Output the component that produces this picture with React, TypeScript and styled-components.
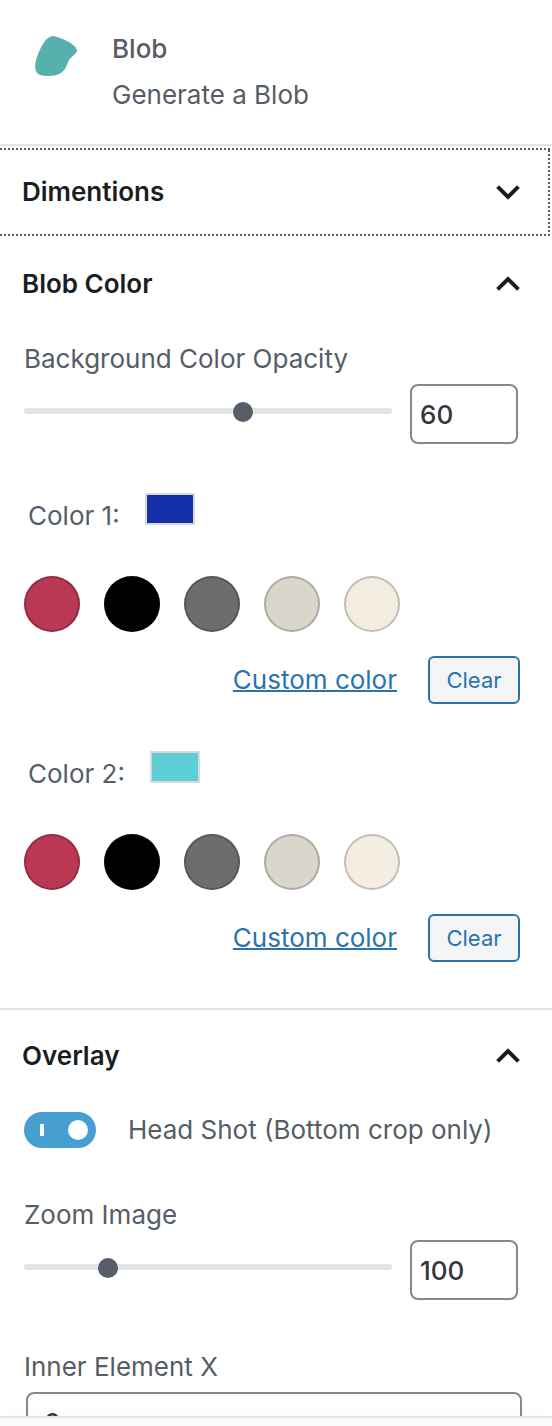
import React, { useId, useState } from "react";
import styled, { createGlobalStyle, css } from "styled-components";

const GlobalStyle = createGlobalStyle`
  *, *::before, *::after { box-sizing: border-box; }
  body {
    margin: 0;
    background: #fff;
    color: #555d66;
    font-family: Inter, "Liberation Sans", sans-serif;
    font-size: 26px;
    line-height: 32px;
  }
  button, input { font: inherit; color: inherit; }
  h2, p { margin: 0; font: inherit; }
`;

const Sidebar = styled.aside`
  display: flex;
  flex-direction: column;
  height: 100vh;
`;

const Scroller = styled.div`
  flex: 1;
  min-height: 0;
  overflow-y: auto;
  scrollbar-width: none;
`;

const Footer = styled.footer`
  position: relative;
  flex: none;
  height: 10px;
  border-top: 2px solid #e2e4e7;
  background: #fafafa;
  box-shadow: 0 0 30px rgba(0, 0, 0, 0.03);
`;

const BlockCard = styled.header`
  display: flex;
  gap: 35px;
  padding: 33px 24px 33px 35px;
  border-bottom: 2px solid #e2e4e7;
`;

const BlobIcon = styled.svg`
  flex: none;
  width: 42px;
  height: 40px;
  margin-top: 3px;
`;

const BlockTitle = styled.h2`
  font-weight: 500;
`;

const BlockDescription = styled.p`
  margin-top: 14px;
`;

const Panel = styled.section<{ $divided?: boolean }>`
  padding: 2px 0;
  ${(p) =>
    p.$divided &&
    css`
      border-top: 2px solid #e2e4e7;
    `}
`;

const dots = "#555d66 0 2px, transparent 2px 4px";

const PanelToggle = styled.button<{ $focused?: boolean }>`
  display: flex;
  align-items: center;
  justify-content: space-between;
  width: 100%;
  height: 88px;
  padding: 0 32px 0 22px;
  border: 0;
  background: none;
  color: #191e23;
  font-weight: 600;
  text-align: left;
  cursor: pointer;
  outline: none;
  ${(p) =>
    p.$focused &&
    css`
      background:
        repeating-linear-gradient(to right, ${dots}) 0 0 / calc(100% - 2px) 2px no-repeat,
        repeating-linear-gradient(to right, ${dots}) 0 100% / calc(100% - 2px) 2px no-repeat,
        repeating-linear-gradient(to bottom, transparent 0 2px, #555d66 2px 4px) calc(100% - 2px) 0 / 2px 100% no-repeat;
    `}
`;

const ChevronIcon = styled.svg`
  flex: none;
  width: 24px;
  height: 16px;
`;

const PanelBody = styled.div<{ $top: number; $bottom: number }>`
  padding: ${(p) => p.$top}px 32px ${(p) => p.$bottom}px 24px;
`;

const Label = styled.label`
  display: block;
`;

const RangeRow = styled.div`
  display: flex;
  align-items: center;
  gap: 18px;
  margin: 9px 2px 0 0;
`;

const Range = styled.input`
  appearance: none;
  flex: 1;
  min-width: 0;
  height: 20px;
  margin: 0 0 6px;
  background: none;
  cursor: pointer;

  &::-webkit-slider-runnable-track {
    height: 6px;
    border-radius: 3px;
    background: #e2e4e7;
  }
  &::-webkit-slider-thumb {
    appearance: none;
    width: 20px;
    height: 20px;
    margin-top: -6px;
    border-radius: 50%;
    background: #555d66;
  }
`;

const inputBox = css`
  height: 60px;
  border: 2px solid #7e8993;
  border-radius: 8px;
  background: #fff;
  color: #32373c;
  font-weight: 500;
  outline: none;
`;

const NumberInput = styled.input`
  ${inputBox}
  width: 108px;
  padding: 0 8px;
  appearance: textfield;
  &::-webkit-inner-spin-button { appearance: none; }
`;

const TextInput = styled.input`
  ${inputBox}
  display: block;
  width: 100%;
  margin: 9px 0 0 2px;
  padding: 0 16px;
`;

const ColorControl = styled.fieldset`
  min-width: 0;
  margin: 0;
  padding: 0;
  border: 0;
`;

const ColorHeading = styled.div`
  display: flex;
  align-items: baseline;
  gap: 25px;
  height: 32px;
  padding-left: 4px;
`;

const ColorPreview = styled.span<{ $color: string }>`
  width: 50px;
  height: 32px;
  border: 2px solid #dadada;
  background: ${(p) => p.$color};
`;

const Palette = styled.div`
  display: flex;
  gap: 24px;
  margin-top: 51px;
`;

const Swatch = styled.button<{ $color: string }>`
  width: 56px;
  height: 56px;
  padding: 0;
  border: 0;
  border-radius: 50%;
  background: ${(p) => p.$color};
  box-shadow: inset 0 0 0 2px rgba(0, 0, 0, 0.2);
  cursor: pointer;
`;

const ColorActions = styled.div`
  display: flex;
  align-items: center;
  justify-content: flex-end;
  gap: 31px;
  margin-top: 24px;
`;

const LinkButton = styled.button`
  padding: 0;
  border: 0;
  background: none;
  color: #2a74ab;
  text-decoration: underline;
  text-decoration-thickness: 2px;
  cursor: pointer;
`;

const ClearButton = styled.button`
  width: 92px;
  height: 48px;
  padding: 0;
  border: 2px solid #2a74ab;
  border-radius: 6px;
  background: #f3f5f6;
  color: #2a74ab;
  font-size: 22px;
  cursor: pointer;
`;

const Stack = styled.div<{ $gap: number }>`
  display: flex;
  flex-direction: column;
  gap: ${(p) => p.$gap}px;
`;

const ToggleLabel = styled.label`
  display: flex;
  align-items: center;
  gap: 32px;
`;

const ToggleSwitch = styled.input`
  appearance: none;
  display: flex;
  flex: none;
  align-items: center;
  justify-content: space-between;
  width: 72px;
  height: 36px;
  margin: 0;
  padding: 0 8px 0 16px;
  border-radius: 18px;
  background: #6c7781;
  cursor: pointer;

  &:checked { background: #479fd1; }
  &::before {
    content: "";
    width: 4px;
    height: 12px;
    background: #fff;
  }
  &::after {
    content: "";
    width: 20px;
    height: 20px;
    border-radius: 50%;
    background: #fff;
  }
  &:not(:checked) { flex-direction: row-reverse; }
`;

const PALETTE = [
  { name: "Red", value: "#bb3854" },
  { name: "Black", value: "#000000" },
  { name: "Gray", value: "#6d6d6d" },
  { name: "Stone", value: "#dad6cb" },
  { name: "Cream", value: "#f4ede1" },
];

function Chevron({ open }: { open: boolean }) {
  return (
    <ChevronIcon viewBox="0 0 24 16" fill="none" stroke="#191e23" strokeWidth="4" aria-hidden="true">
      <path d={open ? "M1.6 13.4 12 3l10.4 10.4" : "M1.6 2.6 12 13 22.4 2.6"} />
    </ChevronIcon>
  );
}

interface SectionProps {
  title: string;
  open?: boolean;
  focused?: boolean;
  divided?: boolean;
  children?: React.ReactNode;
}

function Section({ title, open = false, focused, divided, children }: SectionProps) {
  const [expanded, setExpanded] = useState(open);
  return (
    <Panel $divided={divided}>
      <PanelToggle $focused={focused} aria-expanded={expanded} onClick={() => setExpanded(!expanded)}>
        {title}
        <Chevron open={expanded} />
      </PanelToggle>
      {expanded && children}
    </Panel>
  );
}

function RangeControl({ label, initial, max }: { label: string; initial: number; max: number }) {
  const id = useId();
  const [value, setValue] = useState(initial);
  const update = (e: React.ChangeEvent<HTMLInputElement>) => setValue(Number(e.target.value));
  return (
    <div>
      <Label htmlFor={id}>{label}</Label>
      <RangeRow>
        <Range id={id} type="range" min={0} max={max} value={value} onChange={update} />
        <NumberInput type="number" aria-label={label} min={0} max={max} value={value} onChange={update} />
      </RangeRow>
    </div>
  );
}

function ColorPicker({ label, initial }: { label: string; initial: string }) {
  const [color, setColor] = useState(initial);
  return (
    <ColorControl aria-label={label}>
      <ColorHeading>
        <span>{label}:</span>
        <ColorPreview $color={color} />
      </ColorHeading>
      <Palette>
        {PALETTE.map((c) => (
          <Swatch key={c.name} type="button" $color={c.value} aria-label={c.name} onClick={() => setColor(c.value)} />
        ))}
      </Palette>
      <ColorActions>
        <LinkButton type="button">Custom color</LinkButton>
        <ClearButton type="button" onClick={() => setColor("transparent")}>Clear</ClearButton>
      </ColorActions>
    </ColorControl>
  );
}

export default function App() {
  const [headShot, setHeadShot] = useState(true);
  return (
    <>
      <GlobalStyle />
      <Sidebar>
        <Scroller>
          <BlockCard>
            <BlobIcon viewBox="0 0 126 120" aria-hidden="true">
              <path
                fill="#56b0ad"
                d="M54 0C70 2 105 17 117 29C127 38 128 45 123 51C117 59 107 64 102 73C97 82 95 95 84 106C73 117 58 120 40 120C22 120 8 118 3 106C-3 90 3 70 10 52C20 27 36 0 54 0Z"
              />
            </BlobIcon>
            <div>
              <BlockTitle>Blob</BlockTitle>
              <BlockDescription>Generate a Blob</BlockDescription>
            </div>
          </BlockCard>

          <Section title="Dimentions" focused />

          <Section title="Blob Color" open>
            <PanelBody $top={15} $bottom={44}>
              <Stack $gap={49}>
                <RangeControl label="Background Color Opacity" initial={60} max={100} />
                <Stack $gap={47}>
                  <ColorPicker label="Color 1" initial="#152eaa" />
                  <ColorPicker label="Color 2" initial="#5dced6" />
                </Stack>
              </Stack>
            </PanelBody>
          </Section>

          <Section title="Overlay" open divided>
            <PanelBody $top={12} $bottom={48}>
              <Stack $gap={51}>
                <ToggleLabel>
                  <ToggleSwitch
                    type="checkbox"
                    role="switch"
                    checked={headShot}
                    onChange={(e) => setHeadShot(e.target.checked)}
                  />
                  Head Shot (Bottom crop only)
                </ToggleLabel>
                <RangeControl label="Zoom Image" initial={100} max={470} />
                <div>
                  <Label htmlFor="inner-x">Inner Element X</Label>
                  <TextInput id="inner-x" type="text" inputMode="numeric" defaultValue="0" />
                </div>
              </Stack>
            </PanelBody>
          </Section>
        </Scroller>
        <Footer />
      </Sidebar>
    </>
  );
}
